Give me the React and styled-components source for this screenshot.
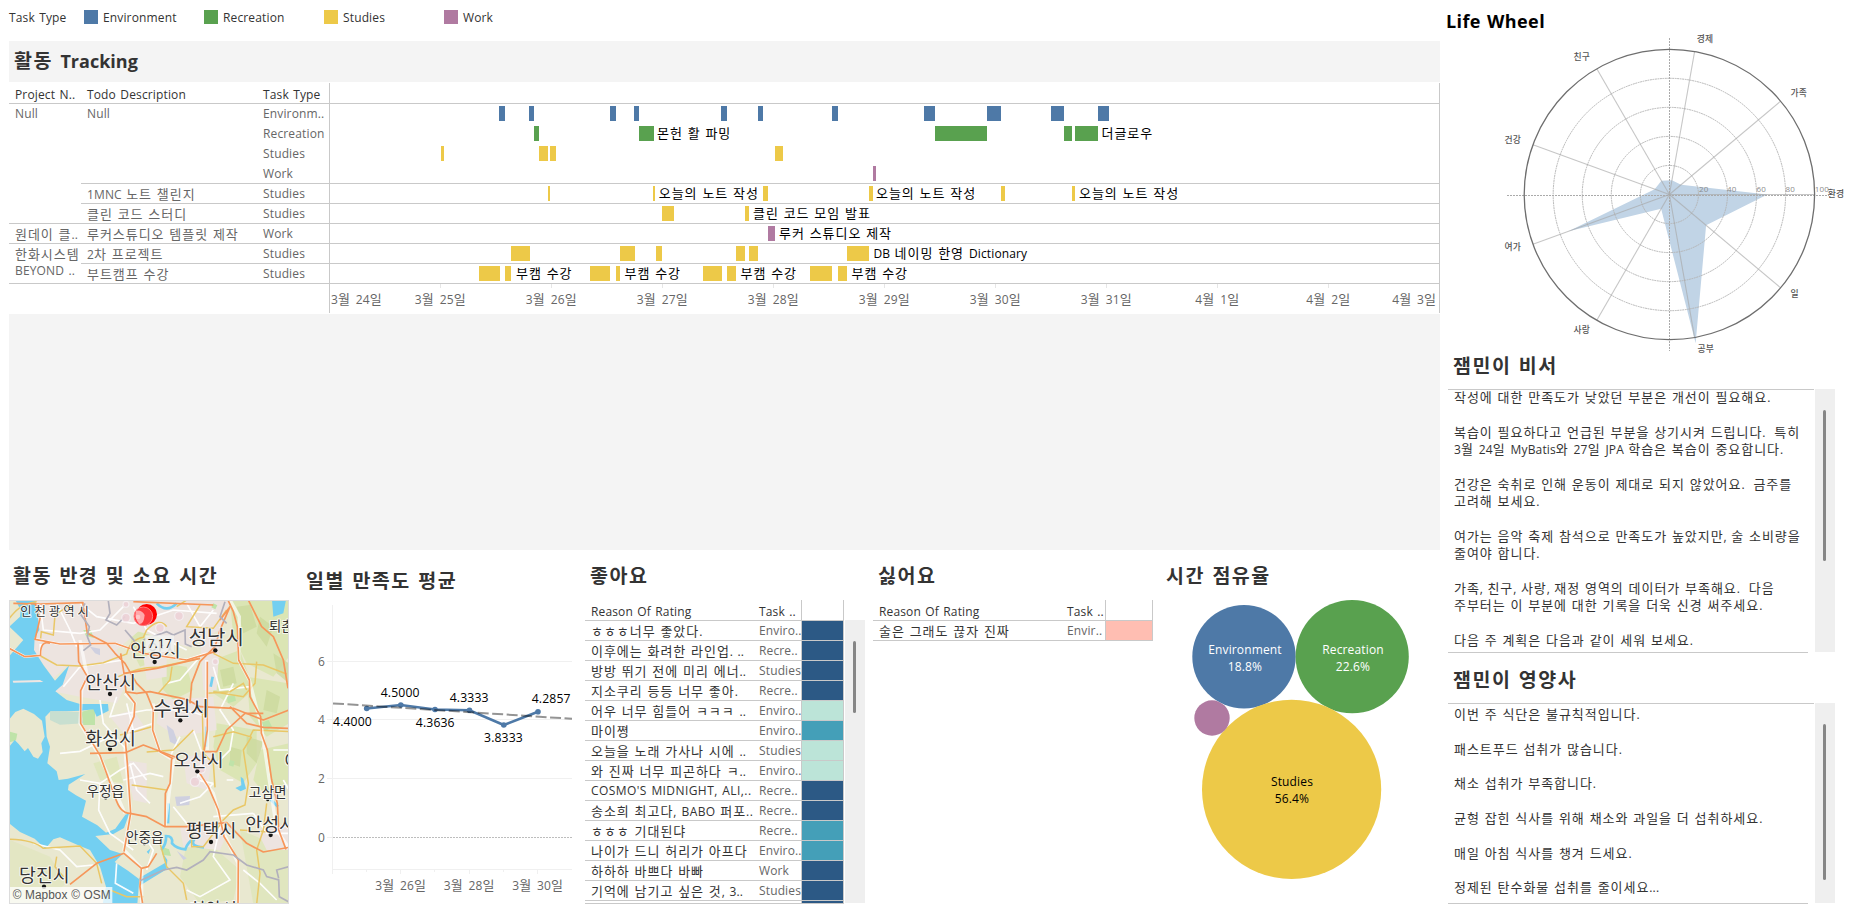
import React from "react";
import styled, { createGlobalStyle, css } from "styled-components";

const GlobalStyle = createGlobalStyle`
  * { box-sizing: border-box; }
  body {
    margin: 0;
    background: #fff;
    font-family: "Open Sans", "Noto Sans CJK KR", sans-serif;
    font-size: 12px;
    letter-spacing: 0.14px;
    word-spacing: 1.1px;
    color: #333;
    overflow: hidden;
  }
  svg { display: block; }
`;

const C = {
  blue: "#4e79a7",
  green: "#59a14f",
  yellow: "#edc948",
  purple: "#b07aa1",
  line: "#c9c9c9",
  soft: "#f0f0f0",
  band: "#f4f4f4",
  dark: "#2c5985",
  mid: "#449fb8",
  light: "#bce4d8",
  pink: "#ffbeb2",
};

/* ---------- mixed Korean / Latin text ---------- */

const koStyle = css`
  font-family: "Noto Sans CJK KR", sans-serif;
  font-size: ${(p) => (p.$title ? "19.5px" : "13px")};
  letter-spacing: ${(p) => (p.$title ? "1.5px" : "0.95px")};
  word-spacing: ${(p) => (p.$title ? "1.6px" : "1px")};
`;
const KoSpan = styled.span`
  ${koStyle}
`;
const KoTspan = styled.tspan`
  ${koStyle}
`;
const split = (s) => s.split(/([ㄱ-ㅎ가-힣]+(?: +[ㄱ-ㅎ가-힣]+)* ?)/).filter(Boolean);
const isKo = (s) => /[ㄱ-ㅎ가-힣]/.test(s);
const Mix = ({ children, svg, title }) => {
  const Tag = svg ? KoTspan : KoSpan;
  return split(children).map((s, i) =>
    isKo(s) ? (
      <Tag key={i} $title={title}>
        {s}
      </Tag>
    ) : (
      <React.Fragment key={i}>{s}</React.Fragment>
    )
  );
};

/* ---------- page frame ---------- */

const Dashboard = styled.div`
  display: flex;
  width: 1851px;
  height: 911px;
  overflow: hidden;
  background: #fff;
`;
const Main = styled.main`
  width: 1431px;
  margin-left: 9px;
  flex: none;
`;
const Side = styled.aside`
  width: 411px;
  flex: none;
`;
const Title = styled.h2`
  margin: 0;
  height: ${(p) => p.$h}px;
  line-height: ${(p) => p.$lh || p.$h}px;
  padding-left: ${(p) => p.$pl}px;
  font-size: 18px;
  font-weight: 700;
  white-space: pre;
  overflow: hidden;
  color: ${(p) => p.$color || "#333"};
  letter-spacing: ${(p) => p.$ls || 0}px;
  background: ${(p) => p.$bg || "transparent"};
`;

const Legend = styled.div`
  display: flex;
  height: 41px;
  padding-top: 10px;
`;
const LegendName = styled.div`
  width: 75px;
  line-height: 16px;
`;
const LegendItem = styled.div`
  display: flex;
  width: 120px;
  gap: 5px;
  line-height: 16px;
`;
const Swatch = styled.i`
  width: 14px;
  height: 14px;
  background: ${(p) => p.$c};
`;

/* ---------- activity tracking ---------- */

const Tracking = styled.section`
  display: flex;
  height: 232px;
  padding-top: 1px;
  background: #fff;
`;
const RowHeads = styled.div`
  width: 320px;
  flex: none;
  color: #666;
`;
const HeadRow = styled.div`
  display: flex;
  height: 21px;
  line-height: 24px;
  color: #333;
  border-bottom: 1px solid ${C.line};
`;
const TrackRow = styled.div`
  display: flex;
  height: 20px;
  line-height: 19px;
`;
const Cell = styled.div`
  width: ${(p) => p.$w}px;
  padding-left: 6px;
  height: 100%;
  white-space: pre;
  overflow: visible;
  flex: none;
  line-height: ${(p) => (p.$raised ? 14 : p.$head ? 24 : 19)}px;
  border-bottom: ${(p) => (p.$b ? `1px solid ${C.line}` : "0")};
`;
const Gap = styled.div`
  height: 236px;
  background: ${C.band};
`;

const trackRows = [
  ["Null", "Null", "Environm..", 0, 0],
  ["", "", "Recreation", 0, 0],
  ["", "", "Studies", 0, 0],
  ["", "", "Work", 0, 1],
  ["", "1MNC 노트 챌린지", "Studies", 0, 1],
  ["", "클린 코드 스터디", "Studies", 1, 1],
  ["원데이 클..", "루커스튜디오 템플릿 제작", "Work", 1, 1],
  ["한화시스템", "2차 프로젝트", "Studies", 0, 1],
  ["BEYOND ..", "부트캠프 수강", "Studies", 1, 1],
];

const ganttRows = [
  { c: C.blue, bars: [[499, 505], [529, 534], [610, 616], [634, 639], [721, 727], [758, 763], [832, 838], [924, 935], [987, 1001], [1051, 1064], [1098, 1109]], t: [] },
  { c: C.green, bars: [[534, 539], [639, 654], [935, 987], [1064, 1072], [1075, 1098]], t: [[657, "몬헌 활 파밍"], [1101.5, "더글로우"]] },
  { c: C.yellow, bars: [[441, 444], [539, 548], [550, 556], [775, 783]], t: [] },
  { c: C.purple, bars: [[873, 876]], t: [] },
  { c: C.yellow, bars: [[548, 550], [653, 655], [763, 768], [869, 873], [1001, 1005], [1072, 1075]], t: [[658.8, "오늘의 노트 작성"], [876, "오늘의 노트 작성"], [1079, "오늘의 노트 작성"]] },
  { c: C.yellow, bars: [[662, 674], [745, 749]], t: [[753, "클린 코드 모임 발표"]] },
  { c: C.purple, bars: [[768, 775]], t: [[779, "루커 스튜디오 제작"]] },
  { c: C.yellow, bars: [[511, 530], [620, 635], [656, 662], [736, 745], [749, 758], [847, 869]], t: [[873.5, "DB 네이밍 한영 Dictionary"]] },
  { c: C.yellow, bars: [[479, 500], [505, 511], [590, 610], [616, 620], [703, 722], [727, 736], [810, 832], [838, 847]], t: [[516, "부캠 수강"], [624.5, "부캠 수강"], [740.5, "부캠 수강"], [851.5, "부캠 수강"]] },
];
const dates = [[331, "3월 24일", "start"], [440, "3월 25일"], [551, "3월 26일"], [662, "3월 27일"], [773, "3월 28일"], [884, "3월 29일"], [995, "3월 30일"], [1106, "3월 31일"], [1217, "4월 1일"], [1328, "4월 2일"], [1437, "4월 3일", "end"]];

const Gantt = () => (
  <svg width="1111" height="231" viewBox="329 83 1111 231">
    <g fill={C.line}>
      {[103, 183, 203, 223, 243, 263, 283].map((y) => (
        <rect key={y} x="329" y={y} width="1111" height="1" />
      ))}
      <rect x="329" y="83" width="1" height="230" />
      <rect x="1439" y="83" width="1" height="230" />
    </g>
    {ganttRows.map((r, i) => (
      <g key={i}>
        {r.bars.map(([a, b]) => (
          <rect key={a} x={a} y={106 + i * 20} width={b - a} height="15" fill={r.c} />
        ))}
        {r.t.map(([x, s]) => (
          <text key={x} x={x} y={117.5 + i * 20} fill="#000">
            <Mix svg>{s}</Mix>
          </text>
        ))}
      </g>
    ))}
    {dates.map(([x, s, a]) => (
      <g key={x}>
        {!a && <rect x={x} y="284" width="1" height="4" fill="#e6e6e6" />}
        <text x={x + (a ? 0 : 0.7)} y="303.5" fill="#666" textAnchor={a || "middle"} xmlSpace="preserve">
          <Mix svg>{s}</Mix>
        </text>
      </g>
    ))}
  </svg>
);

/* ---------- lower panels ---------- */

const Panels = styled.div`
  display: flex;
  height: 361px;
`;
const Panel = styled.section`
  width: ${(p) => p.$w}px;
  flex: none;
`;
const MapFrame = styled.div`
  width: 280px;
  height: 304px;
  border: 1px solid #dcdcdc;
  overflow: hidden;
`;
const MapText = styled.text`
  font-family: "Noto Sans CJK KR", sans-serif;
  font-size: ${(p) => p.$s}px;
  text-anchor: middle;
  fill: #333;
  paint-order: stroke;
  stroke: rgba(255, 255, 255, 0.75);
  stroke-width: 6px;
  stroke-linejoin: round;
  letter-spacing: ${(p) => p.$ls || 0}px;
`;
const Attribution = styled.text`
  font-family: "Liberation Sans", sans-serif;
  font-size: 36px;
  fill: #555;
`;

const MapChart = () => (
  <MapFrame>
    <svg width="278" height="302" viewBox="30 153 834 906">
      <rect x="27" y="150" width="840" height="912" fill="#e9e8d0" />
      <g fill="#dbe5b4">
        <path d="M640 330L720 300L760 420L700 470L640 430Z" />
        <path d="M690 150L867 150L867 320L820 380L740 340L700 260Z" />
        <path d="M740 380L867 400L867 520L800 560L750 500Z" />
        <path d="M480 340L560 350L580 420L520 450L490 420Z" />
        <path d="M650 520L770 540L770 640L730 700L660 660L640 590Z" />
        <path d="M780 600L867 580L867 700L800 740L760 690Z" />
        <path d="M400 240L500 270L480 330L420 350L390 290Z" />
        <path d="M560 880L650 900L720 960L700 1050L600 1062L540 980Z" opacity=".6" />
        <path d="M30 870L150 920L200 1000L120 1062L28 1062Z" opacity=".45" />
        <path d="M720 840L867 900L867 1062L760 1062Z" opacity=".6" />
        <path d="M280 640L350 620L370 700L300 690Z" opacity=".7" />
      </g>
      <g fill="#cbd99c" opacity=".75">
        <path d="M710 170L750 165L770 230L730 250ZM780 200L820 230L800 290L770 250ZM800 420L840 440L830 490L790 480ZM740 560L790 575L770 640L740 610Z" />
        <path d="M820 310L867 340L867 400L830 370ZM660 360L700 350L710 400L670 410ZM690 590L725 600L720 650L690 640Z" />
      </g>
      <g fill="#ede4e0">
        <path d="M105 150L400 150L420 240L350 300L390 380L350 460L240 440L165 425L205 345L160 385L100 300Z" />
        <path d="M330 150L690 150L660 240L560 290L440 250L350 230Z" />
        <path d="M430 320L500 300L500 380L440 390ZM600 260L660 260L650 420L610 420Z" />
        <path d="M480 450L640 440L650 540L530 560L470 520ZM550 620L640 610L620 720L560 700Z" />
        <path d="M370 630L440 640L440 760L400 750Z M540 830L690 830L660 900L550 890Z" />
        <path d="M330 500L400 480L440 540L380 560ZM770 840L867 820L867 900L800 900Z" />
      </g>
      <g fill="#bfe3a9">
        <path d="M245 485L285 475L285 525L250 525Z" />
        <path d="M640 160l12 6l-6 12l-12-6ZM250 240l22 0l10 24l-24-6ZM680 440l24-6l4 18l-24 8ZM780 520l26-10l10 20l-20 14ZM690 630l14 4l-4 16l-14-4Z" />
        <path d="M485 890l22 8l6 20l-26-4ZM28 545l24 6l-4 20l-20 6Z" />
      </g>
      <g fill="#cfd0e0">
        <path d="M500 525L520 540L538 590L510 575ZM525 740L570 738L568 765L530 768ZM530 902L560 925L550 930ZM270 290L300 296L300 316L285 310Z" />
      </g>
      <g fill="#73cff1">
        <path d="M84 150L106 150L112 190L118 240L104 262L102 300L130 345L165 392L208 345L188 404L166 424L200 450L240 462L324 462L326 482L290 500L280 478L242 482L200 484L152 484L136 500L140 560L150 590L142 640L170 664L176 690L204 686L256 672L206 704L204 720L228 736L258 752L246 800L292 826L318 848L346 836L376 794L388 790L372 834L340 852L286 858L330 900L368 912L344 936L384 962L418 988L412 1062L308 1062L318 1010L300 950L270 900L240 888L180 862L160 868L136 896L104 866L60 846L28 820L28 590L44 570L56 582L74 604L84 594L100 620L114 626L128 606L124 580L134 560L126 512L102 492L70 476L46 486L28 508L28 318L70 270L28 230L60 200L62 180L46 150Z" />
        <path d="M60 256L92 242L98 262L70 270ZM816 150L858 150L850 190L820 200ZM706 714L724 706L722 680L730 686L738 716L722 724Z" />
        <path d="M418 984L496 938L490 912L502 930L500 958L424 1004ZM440 905L452 895L446 912Z" />
      </g>
      <path d="M150 484L240 486L250 520L180 524L150 510Z" fill="#bfdccf" opacity=".8" />
      <path d="M38 392L120 390L130 396L40 398Z" fill="#f0e6e2" />
      <g fill="none" stroke="#73cff1" strokeWidth="8">
        <path d="M484 900Q500 880 498 858Q520 858 516 880Q530 896 556 898Q562 876 584 866M584 866Q566 890 612 892" />
        <path d="M506 760L504 820M620 530L618 590M632 410L638 380M470 160Q500 190 530 160" />
        <path d="M808 745L834 770" />
      </g>
      <g fill="none" stroke="#fff" strokeWidth="5" opacity=".95">
        <path d="M120 160L130 240L240 250L300 240L370 170M170 160L210 240L230 290M240 160L290 200L400 220L520 180L650 190" />
        <path d="M190 410L240 350L370 330M300 450L310 520L380 600M350 440L330 500L440 480L560 480L620 500M380 460L400 540L460 520" />
        <path d="M180 610L240 604L330 560M240 690L300 700L360 660L400 640L440 690M300 700L296 780L330 850L400 900M370 690L450 670L490 680M390 640L410 720L450 760" />
        <path d="M540 560L510 620M580 540L610 620L590 690L640 700M650 640L690 600L700 540L660 480L700 400M640 800L760 790M540 760L600 740L640 700M680 690L700 690" />
        <path d="M520 770L560 820L660 830M100 880L180 900L230 950L280 945M440 960L460 900L440 870M350 940L346 1000L400 1030M660 830L640 920L690 990L600 1040L560 1020M760 790L800 850L867 850M730 960L780 1000L830 1050" />
        <path d="M560 160L600 230L640 180M640 350L660 420L750 410M500 400L540 390L600 320M820 600L867 600M850 690L867 720M400 170L440 240L560 300" />
      </g>
      <g fill="none" stroke="#fff" strokeWidth="7.5">
        <path d="M105 268L180 282L345 280L430 310L560 330L620 310M28 295L75 320L122 316L122 282" />
      </g>
      <g fill="none" stroke="#e9c766" strokeWidth="4.5">
        <path d="M28 205Q60 160 110 155M122 265L124 245L160 255L165 195L210 165M122 318L170 345L240 348L310 338L380 312Q390 270 430 262L440 240Q480 200 500 230" />
        <path d="M355 380Q420 350 475 352L600 325M640 310L700 340L790 345L860 372M516 350L510 390L475 430M620 430L690 425L730 400L740 420M770 335L765 400L730 440L640 425" />
        <path d="M360 555Q410 545 455 530M440 606L520 600L560 560L580 540M395 705L500 720M607 480L610 610L640 640L645 712M640 560L700 545L750 560L760 540L867 545M755 560L730 600L745 700L735 765L700 780L660 820" />
        <path d="M28 868Q100 870 130 895L240 888L290 940L305 1000M330 1020L380 1040L430 1040M480 880L500 950L550 1000L560 1050M575 840L575 890L610 890L660 825M720 840L800 845M170 920L165 950L190 980M800 760L790 840L770 900L780 970L770 1062M560 150L530 170M600 165L560 230L640 235L680 180" />
      </g>
      <g fill="none" stroke="#fff" strokeWidth="10" opacity=".65">
        <path d="M240 270L262 380L245 420L240 520L300 620L375 790M375 430L405 460L375 600L392 790L372 900L425 955L425 1062M460 460L458 540L480 605L520 630L495 830" />
        <path d="M620 330L622 600M690 150L718 200L716 330L748 390L784 530L830 840L867 895M595 670L640 730L672 850L714 940L714 1062" />
      </g>
      <g fill="none" stroke="#f6965a" strokeWidth="5" strokeLinejoin="round">
        <path d="M105 160L120 205L105 268L180 282L345 280L430 310L560 330L645 305M28 295L75 320L122 316Q120 270 150 280" />
        <path d="M234 278L236 335L262 380L242 422L242 520L300 616L345 740Q360 790 390 790L440 800L495 830L560 830L680 818L740 880L790 906L867 892" />
        <path d="M248 156L262 250L320 280L345 310L375 340L410 400L440 430L460 480L458 540L480 605L520 626M362 310L372 370L470 355L600 325M372 370L378 425L405 460L402 500L375 560L382 640L392 790L372 905" />
        <path d="M375 425L410 430L450 425L560 448L600 470L700 475L790 510L867 480M690 470L740 520L790 532L867 535M270 610L376 608L430 585L470 600L535 625M515 625L510 700L496 730L495 830" />
        <path d="M660 210L690 170L660 240L645 290L600 335L575 400L570 460M622 335L622 540L612 605L650 605L680 540L735 490L790 490" />
        <path d="M684 150L700 185L712 230L716 330L748 390L750 440L782 500L784 550L802 600L815 690L832 760L836 840L858 898M745 150L785 230L820 260L850 330L864 415" />
        <path d="M590 655L625 710L655 780L672 860L715 930L714 1062M210 1003L290 940L372 910L424 955L420 1010L428 1062M424 955L445 950L470 910M40 160L120 162L250 158M400 155L640 165" />
      </g>
      <g fill="none" stroke="#b2b0bc" strokeWidth="5">
        <path d="M255 160L240 190L268 230L262 260L272 285L250 302M325 153L330 190L318 210L350 225L375 200M375 240L405 275M430 270L500 245L520 255L555 240L556 282L575 290M675 155L660 200L680 220" />
        <path d="M420 992L490 960L530 952L560 960L610 930L630 905L700 915L740 945L790 960L800 980L836 990L838 1040L867 1056M836 985L830 960L867 950" />
      </g>
      <g fill="#edd3d8" stroke="#f5eef0" strokeWidth="4" opacity=".9">
        <circle cx="378" cy="203" r="13" />
        <circle cx="537" cy="198" r="13" />
        <circle cx="480" cy="234" r="13" />
        <circle cx="585" cy="695" r="14" />
        <circle cx="604" cy="658" r="12" />
        <circle cx="646" cy="335" r="9" />
        <circle cx="378" cy="163" r="9" />
      </g>
      <g fill="#151515">
        {[[646, 301], [464, 336], [330, 432], [541, 511], [330, 597], [592, 664], [633, 876], [812, 855], [132, 1010]].map(([x, y]) => (
          <circle key={x + y} cx={x} cy={y} r="6.5" />
        ))}
        {[[317, 744], [433, 881], [803, 749]].map(([x, y]) => (
          <circle key={x + y} cx={x} cy={y} r="4.5" />
        ))}
      </g>
      <MapText x="168" y="199" $s="37" $ls="9">인천광역시</MapText>
      <MapText x="649" y="284" $s="60">성남시</MapText>
      <MapText x="466" y="322" $s="55">안양시</MapText>
      <MapText x="332" y="418" $s="55">안산시</MapText>
      <MapText x="543" y="497" $s="61">수원시</MapText>
      <MapText x="332" y="584" $s="55">화성시</MapText>
      <MapText x="596" y="651" $s="54">오산시</MapText>
      <MapText x="316" y="739" $s="41">우정읍</MapText>
      <MapText x="803" y="742" $s="41">고삼면</MapText>
      <MapText x="434" y="876" $s="41">안중읍</MapText>
      <MapText x="633" y="861" $s="55">평택시</MapText>
      <MapText x="812" y="842" $s="55">안성시</MapText>
      <MapText x="133" y="997" $s="55">당진시</MapText>
      <MapText x="862" y="243" $s="40">퇴촌면</MapText>
      <MapText x="876" y="650" $s="50">이</MapText>
      <MapText x="640" y="1095" $s="51">천안시</MapText>
      <circle cx="440" cy="193" r="31" fill="#ff0000" />
      <circle cx="430" cy="199" r="28" fill="#ff3b3f" stroke="#ff7e80" strokeWidth="3" />
      <path d="M408 182Q425 178 434 195Q432 222 418 222Q402 206 408 182Z" fill="#ffa9ab" />
      <circle cx="414" cy="201" r="7" fill="#ffc7c8" />
      <rect x="436" y="256" width="86" height="50" fill="#f1f1ef" opacity=".9" />
      <text x="479" y="294" textAnchor="middle" fontSize="36" fill="#111">7.17</text>
      <rect x="30" y="1011" width="307" height="48" fill="#fff" opacity=".75" />
      <Attribution x="38" y="1047" textLength="294" lengthAdjust="spacingAndGlyphs">© Mapbox © OSM</Attribution>
    </svg>
  </MapFrame>
);

const pts = [[366.7, 708.5], [400.8, 705], [435, 709.5], [469.5, 710.3], [503.8, 725], [538, 711.7]];
const LineChart = () => (
  <svg width="276" height="311" viewBox="300 600 276 311">
    <g fill={C.soft}>
      <rect x="332" y="605" width="1" height="269" />
      {[661, 719, 778].map((y) => (
        <rect key={y} x="327" y={y} width="245" height="1" />
      ))}
      <rect x="327" y="837" width="5" height="1" />
      <rect x="332" y="869" width="240" height="1" />
      {[366, 434, 503].map((x) => (
        <rect key={x} x={x} y="870" width="1" height="2" />
      ))}
      {[400, 469, 537].map((x) => (
        <rect key={x} x={x} y="870" width="1" height="4" />
      ))}
    </g>
    <line x1="333" x2="572" y1="837.5" y2="837.5" stroke="#bdbdbd" strokeDasharray="2 1" />
    <polyline points={pts.join(" ")} fill="none" stroke={C.blue} strokeWidth="2.6" />
    {pts.map(([x, y]) => (
      <circle key={x} cx={x} cy={y} r="2.8" fill={C.blue} />
    ))}
    <line x1="333" y1="703.4" x2="572" y2="718.8" stroke="#000" strokeOpacity=".42" strokeWidth="2" strokeDasharray="11 3.5" />
    <g fill="#666" textAnchor="end">
      {[[6, 661], [4, 719.5], [2, 778], [0, 837]].map(([n, y]) => (
        <text key={n} x="325" y={y + 4.7}>{n}</text>
      ))}
    </g>
    <g fill="#666" textAnchor="middle">
      {[[401, "3월 26일"], [469.5, "3월 28일"], [538, "3월 30일"]].map(([x, s]) => (
        <text key={x} x={x} y="889.7"><Mix svg>{s}</Mix></text>
      ))}
    </g>
    <g fill="#000" textAnchor="middle" fontSize="12.2">
      {[[352.5, 721.7, "4.4000"], [400.2, 692.7, "4.5000"], [435.3, 722.7, "4.3636"], [469.2, 697.5, "4.3333"], [503.5, 737.7, "3.8333"], [551.2, 698.5, "4.2857"]].map(([x, y, s]) => (
        <text key={s} x={x} y={y + 4.4}>{s}</text>
      ))}
    </g>
  </svg>
);

const RatingArea = styled.div`
  display: flex;
  height: 304px;
  overflow: hidden;
`;
const RatingTable = styled.div`
  width: ${(p) => p.$w}px;
  border-bottom: ${(p) => (p.$clip ? `1px solid ${C.line}` : "0")};
  overflow: hidden;
`;
const RatingRow = styled.div`
  display: flex;
  height: ${(p) => (p.$head ? 21 : 20)}px;
  line-height: ${(p) => (p.$head ? 23 : 19)}px;
  border-bottom: 1px solid ${C.line};
  white-space: pre;
  color: ${(p) => (p.$head ? "#333" : "#666")};
`;
const Reason = styled.div`
  width: ${(p) => p.$w}px;
  padding-left: 6px;
  flex: none;
  color: #333;
  letter-spacing: ${(p) => (p.$wide ? 0.42 : 0.14)}px;
`;
const Task = styled.div`
  width: ${(p) => p.$w}px;
  flex: none;
`;
const Score = styled.div`
  flex: 1;
  border: solid ${C.line};
  border-width: 0 1px;
  background: ${(p) => p.$c || "#fff"};
`;
const Track = styled.div`
  width: 20px;
  flex: none;
  height: ${(p) => p.$h}px;
  margin-top: ${(p) => p.$mt || 0}px;
  margin-left: ${(p) => p.$ml}px;
  padding: 21px 0 0 8px;
  background: #efefef;
`;
const Thumb = styled.div`
  width: 3px;
  height: ${(p) => p.$h}px;
  border-radius: 2px;
  background: #868686;
`;

const likes = [
  ["ㅎㅎㅎ너무 좋았다.", "Enviro..", C.dark],
  ["이후에는 화려한 라인업. ..", "Recre..", C.dark],
  ["방방 뛰기 전에 미리 에너..", "Studies", C.dark],
  ["지소쿠리 등등 너무 좋아.", "Recre..", C.dark],
  ["어우 너무 힘들어 ㅋㅋㅋ ..", "Enviro..", C.light],
  ["마이쪙", "Enviro..", C.mid],
  ["오늘을 노래 가사나 시에 ..", "Studies", C.light],
  ["와 진짜 너무 피곤하다 ㅋ..", "Enviro..", C.light],
  ["COSMO'S MIDNIGHT, ALI,..", "Recre..", C.dark],
  ["송소희 최고다, BABO 퍼포..", "Recre..", C.dark],
  ["ㅎㅎㅎ 기대된댜", "Recre..", C.mid],
  ["나이가 드니 허리가 아프다", "Enviro..", C.mid],
  ["하하하 바쁘다 바빠", "Work", C.dark],
  ["기억에 남기고 싶은 것, 3..", "Studies", C.dark],
  ["", "", C.dark],
];

const Rating = ({ rows, w, rw, tw, clip }) => (
  <RatingTable $w={w} $clip={clip}>
    <RatingRow $head>
      <Reason $w={rw}>Reason Of Rating</Reason>
      <Task $w={tw}>Task ..</Task>
      <Score />
    </RatingRow>
    {rows.map(([a, b, c], i) => (
      <RatingRow key={i}>
        <Reason $w={rw} $wide={/[A-Z]/.test(a)}><Mix>{a}</Mix></Reason>
        <Task $w={tw}>{b}</Task>
        <Score $c={c} />
      </RatingRow>
    ))}
  </RatingTable>
);

const Bubbles = () => (
  <svg width="280" height="311" viewBox="1160 600 280 311">
    <circle cx="1244" cy="656.7" r="51.7" fill={C.blue} />
    <circle cx="1352.2" cy="656.6" r="56.6" fill={C.green} />
    <circle cx="1291.6" cy="789.4" r="89.6" fill={C.yellow} />
    <circle cx="1212" cy="718" r="17.7" fill={C.purple} />
    <g textAnchor="middle" fill="#fff">
      <text x="1245" y="654">Environment</text>
      <text x="1245" y="671">18.8%</text>
      <text x="1353" y="654">Recreation</text>
      <text x="1353" y="671">22.6%</text>
    </g>
    <g textAnchor="middle" fill="#000">
      <text x="1292" y="786">Studies</text>
      <text x="1292" y="803">56.4%</text>
    </g>
  </svg>
);

/* ---------- side column ---------- */

const WheelText = styled.text`
  font-family: "Noto Sans CJK KR", sans-serif;
  font-size: 8.8px;
  font-weight: 500;
  text-anchor: middle;
  fill: #555;
`;
const cx = 1669.4;
const cy = 194.5;
const R = 145.2;
const polar = (deg, v) => [cx + (R * v * Math.cos((deg * Math.PI) / 180)) / 100, cy - (R * v * Math.sin((deg * Math.PI) / 180)) / 100];
const values = [67.5, 10.5, 10, 11, 10.8, 74, 11.4, 104, 33];
const wheelLabels = [[1705, 38.5, "경제"], [1798.7, 92.3, "가족"], [1836, 193.8, "환경"], [1581.7, 57, "친구"], [1512.7, 139.7, "건강"], [1512.7, 247, "여가"], [1581.7, 330, "사랑"], [1705.7, 348.3, "공부"], [1794.7, 294, "일"]];

const LifeWheel = () => (
  <svg width="411" height="319" viewBox="1440 34 411 319">
    <polygon points={values.map((v, i) => polar(i * 40, v).join()).join(" ")} fill="#c1d4e6" />
    <g fill="none" stroke="#b5b5b5" strokeWidth="1" strokeDasharray="1.8 .7">
      {[1, 2, 3, 4].map((k) => (
        <circle key={k} cx={cx} cy={cy} r={k * 29.05} />
      ))}
    </g>
    <g stroke="#a8a8a8" strokeOpacity=".65" strokeWidth="1.1">
      {values.map((_, i) => {
        const [x, y] = polar(i * 40, 100);
        return <line key={i} x1={cx} y1={cy} x2={x} y2={y} />;
      })}
    </g>
    <g stroke="#aaa" strokeDasharray="2 1">
      <line x1="1507" y1="195.5" x2="1829" y2="195.5" />
      <line x1="1669.5" y1="38" x2="1669.5" y2="351" />
    </g>
    <circle cx={cx} cy={cy} r={R} fill="none" stroke="#6e6e6e" strokeWidth="1.3" />
    <g fontSize="8" fill="#8c8c8c" textAnchor="middle">
      {[[1703.7, 20], [1731.7, 40], [1761.3, 60], [1790.2, 80], [1821.8, 100]].map(([x, n]) => (
        <text key={n} x={x} y="192.3">{n}</text>
      ))}
    </g>
    {wheelLabels.map(([x, y, s]) => (
      <WheelText key={s} x={x} y={y + 3.2}>{s}</WheelText>
    ))}
  </svg>
);

const Note = styled.div`
  display: flex;
  height: ${(p) => p.$h}px;
  margin-left: 8px;
  align-items: flex-start;
`;
const NoteText = styled.div`
  width: 366px;
  height: 100%;
  padding-left: 6px;
  color: #333;
  white-space: pre;
  overflow: hidden;
  border-top: 1px solid ${C.line};
  background: linear-gradient(${C.line}, ${C.line}) left bottom / 360px 1px no-repeat;
`;
const NoteScroll = styled.div`
  margin-top: ${(p) => p.$mt}px;
`;
const NoteLine = styled.div`
  height: 17.33px;
  line-height: 17.33px;
`;

const secretary = [
  "작성에 대한 만족도가 낮았던 부분은 개선이 필요해요.", "",
  "복습이 필요하다고 언급된 부분을 상기시켜 드립니다.  특히",
  "3월 24일 MyBatis와 27일 JPA 학습은 복습이 중요합니다.", "",
  "건강은 숙취로 인해 운동이 제대로 되지 않았어요.  금주를",
  "고려해 보세요.", "",
  "여가는 음악 축제 참석으로 만족도가 높았지만, 술 소비량을",
  "줄여야 합니다.", "",
  "가족, 친구, 사랑, 재정 영역의 데이터가 부족해요.  다음",
  "주부터는 이 부분에 대한 기록을 더욱 신경 써주세요.", "",
  "다음 주 계획은 다음과 같이 세워 보세요.",
];
const dietitian = [
  "이번 주 식단은 불규칙적입니다.", "",
  "패스트푸드 섭취가 많습니다.", "",
  "채소 섭취가 부족합니다.", "",
  "균형 잡힌 식사를 위해 채소와 과일을 더 섭취하세요.", "",
  "매일 아침 식사를 챙겨 드세요.", "",
  "정제된 탄수화물 섭취를 줄이세요...",
];

const NoteBox = ({ lines, h, mt, thumb }) => (
  <Note $h={h}>
    <NoteText>
      <NoteScroll $mt={mt}>
        {lines.map((l, i) => (
          <NoteLine key={i}><Mix>{l}</Mix></NoteLine>
        ))}
      </NoteScroll>
    </NoteText>
    <Track $h={h - 1} $ml={1}>
      <Thumb $h={thumb} />
    </Track>
  </Note>
);

export default function App() {
  return (
    <Dashboard>
      <GlobalStyle />
      <Main>
        <Legend>
          <LegendName>Task Type</LegendName>
          {[["Environment", C.blue], ["Recreation", C.green], ["Studies", C.yellow], ["Work", C.purple]].map(([n, c]) => (
            <LegendItem key={n}>
              <Swatch $c={c} />
              {n}
            </LegendItem>
          ))}
        </Legend>
        <Title $h={41} $lh={37} $pl={5} $bg={C.band}><Mix title>활동 Tracking</Mix></Title>
        <Tracking>
          <RowHeads>
            <HeadRow>
              <Cell $head $w={72}>Project N..</Cell>
              <Cell $head $w={176}>Todo Description</Cell>
              <Cell $head $w={72}>Task Type</Cell>
            </HeadRow>
            {trackRows.map(([a, b, c, pb, tb], i) => (
              <TrackRow key={i}>
                <Cell $w={72} $b={pb} $raised={i === 8}><Mix>{a}</Mix></Cell>
                <Cell $w={176} $b={tb}><Mix>{b}</Mix></Cell>
                <Cell $w={72} $b={tb}>{c}</Cell>
              </TrackRow>
            ))}
          </RowHeads>
          <Gantt />
        </Tracking>
        <Gap />
        <Panels>
          <Panel $w={291}>
            <Title $h={50} $pl={4}><Mix title>활동 반경 및 소요 시간</Mix></Title>
            <MapChart />
          </Panel>
          <Panel $w={276}>
            <Title $h={50} $lh={60} $pl={6}><Mix title>일별 만족도 평균</Mix></Title>
            <LineChart />
          </Panel>
          <Panel $w={9} />
          <Panel $w={288}>
            <Title $h={50} $pl={5}><Mix title>좋아요</Mix></Title>
            <RatingArea>
              <Rating rows={likes} w={259} rw={174} tw={42} clip />
              <Track $h={283} $mt={20} $ml={1}><Thumb $h={72} /></Track>
            </RatingArea>
          </Panel>
          <Panel $w={280}>
            <Title $h={50} $pl={5}><Mix title>싫어요</Mix></Title>
            <RatingArea>
              <Rating rows={[["술은 그래도 끊자 진짜", "Envir..", C.pink]]} w={280} rw={194} tw={38} />
            </RatingArea>
          </Panel>
          <Panel $w={7} />
          <Panel $w={280}>
            <Title $h={50} $pl={6}><Mix title>시간 점유율</Mix></Title>
            <Bubbles />
          </Panel>
        </Panels>
      </Main>
      <Side>
        <Title $h={34} $lh={43} $pl={6} $color="#000" $ls={0.4}>Life Wheel</Title>
        <LifeWheel />
        <Title $h={36} $lh={24} $pl={13}><Mix title>잼민이 비서</Mix></Title>
        <NoteBox lines={secretary} h={264} mt={-2} thumb={151} />
        <Title $h={50} $lh={52} $pl={13}><Mix title>잼민이 영양사</Mix></Title>
        <NoteBox lines={dietitian} h={201} mt={1} thumb={156} />
      </Side>
    </Dashboard>
  );
}
